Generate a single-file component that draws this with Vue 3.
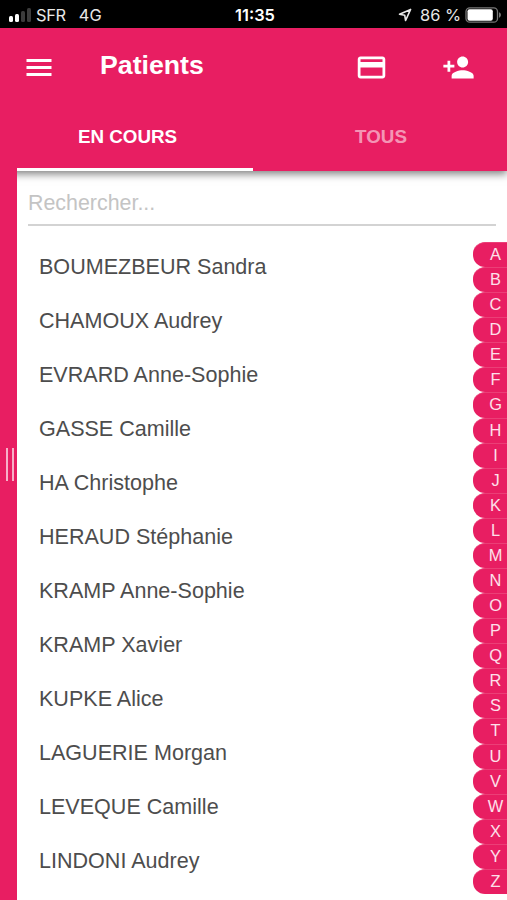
<template>
  <div class="phone">
    <div class="status-bar">
      <div class="status-side">
        <span class="signal">
          <i v-for="n in 4" :key="n" class="signal-bar" :class="['level-' + n, { on: n <= 2 }]"></i>
        </span>
        <span class="carrier">SFR</span>
        <span class="network">4G</span>
      </div>
      <span class="clock">11:35</span>
      <div class="status-side right">
        <svg class="location" viewBox="0 0 14 14">
          <path d="M12.6 1.4 1.5 6.3l5.2.9.9 5.3z" />
        </svg>
        <span class="percent">86 %</span>
        <svg class="battery" viewBox="0 0 37 16">
          <rect class="battery-case" x="1" y=".8" width="31.5" height="14.4" rx="3.8" />
          <rect class="battery-fill" x="2.5" y="2.3" width="25.3" height="11.4" rx="2" />
          <path class="battery-tip" d="M34 5.3c2.6.7 2.6 4.7 0 5.4z" />
        </svg>
      </div>
    </div>

    <header class="toolbar">
      <div class="toolbar-row">
        <svg class="menu-icon" viewBox="0 0 26 19">
          <path d="M.5 1h25v3h-25zM.5 8h25v3h-25zM.5 15h25v3h-25z" />
        </svg>
        <h1 class="title">Patients</h1>
        <svg class="action-icon" viewBox="0 0 24 24">
          <path d="M20 4H4c-1.11 0-1.99.89-1.99 2L2 18c0 1.11.89 2 2 2h16c1.11 0 2-.89 2-2V6c0-1.11-.89-2-2-2zm0 14H4v-6h16v6zm0-10H4V6h16v2z" />
        </svg>
        <svg class="action-icon add" viewBox="0 0 24 24">
          <path d="M15 12c2.21 0 4-1.79 4-4s-1.79-4-4-4-4 1.79-4 4 1.79 4 4 4zm-9-2V7H4v3H1v2h3v3h2v-3h3v-2H6zm9 4c-2.67 0-8 1.34-8 4v2h16v-2c0-2.66-5.33-4-8-4z" />
        </svg>
      </div>
      <nav class="tabs">
        <button
          v-for="tab in tabs"
          :key="tab"
          class="tab"
          :class="{ active: tab === activeTab }"
          @click="activeTab = tab"
        >{{ tab }}</button>
      </nav>
    </header>

    <div class="body">
      <div class="drawer-edge">
        <span class="grip"></span>
      </div>
      <main class="content">
        <input v-model="search" class="search" type="text" placeholder="Rechercher..." />
        <div class="columns">
          <ul class="patients">
            <li v-for="patient in visiblePatients" :key="patient" class="patient">{{ patient }}</li>
          </ul>
          <div class="index">
            <span v-for="letter in letters" :key="letter" class="letter">{{ letter }}</span>
          </div>
        </div>
      </main>
    </div>
  </div>
</template>

<script setup>
import { ref, computed } from 'vue'

const tabs = ['EN COURS', 'TOUS']
const activeTab = ref('EN COURS')
const search = ref('')

const letters = 'ABCDEFGHIJKLMNOPQRSTUVWXYZ'.split('')

const patients = [
  'BOUMEZBEUR Sandra',
  'CHAMOUX Audrey',
  'EVRARD Anne-Sophie',
  'GASSE Camille',
  'HA Christophe',
  'HERAUD Stéphanie',
  'KRAMP Anne-Sophie',
  'KRAMP Xavier',
  'KUPKE Alice',
  'LAGUERIE Morgan',
  'LEVEQUE Camille',
  'LINDONI Audrey',
]

const visiblePatients = computed(() =>
  patients.filter(p => p.toLowerCase().includes(search.value.toLowerCase()))
)
</script>

<style>
body {
  margin: 0;
}
</style>

<style scoped>
.phone {
  width: 507px;
  height: 900px;
  display: flex;
  flex-direction: column;
  overflow: hidden;
  background: #fff;
  font-family: "Liberation Sans", Arial, sans-serif;
}

.status-bar {
  height: 28px;
  flex: none;
  display: flex;
  align-items: center;
  background: #000;
  color: #e8e8e8;
  font-family: Inter, sans-serif;
  font-size: 16.4px;
  line-height: 28px;
  padding: 2px 5px 0 8px;
  box-sizing: border-box;
}

.status-side {
  flex: 1;
  display: flex;
  align-items: center;
}

.status-side.right {
  justify-content: flex-end;
}

.signal {
  display: flex;
  align-items: flex-end;
  gap: 2px;
  height: 14px;
  margin: 0 5px 1px 1px;
}

.signal-bar {
  width: 4px;
  border-radius: 1.5px;
  background: #3c3c3c;
}

.signal-bar.on {
  background: #fff;
}

.level-1 { height: 6px; }
.level-2 { height: 8px; }
.level-3 { height: 11px; }
.level-4 { height: 14px; }

.carrier {
  letter-spacing: -0.3px;
}

.network {
  margin-left: 13px;
}

.clock {
  color: #fff;
  font-weight: 600;
}

.location {
  width: 14px;
  height: 14px;
  margin-right: 8px;
  fill: none;
  stroke: #e8e8e8;
  stroke-width: 1.6;
  stroke-linejoin: round;
}

.battery {
  width: 37px;
  height: 16px;
  margin: 0 0 1px 4px;
}

.battery-case {
  fill: none;
  stroke: #777;
  stroke-width: 1.3;
}

.battery-fill {
  fill: #fff;
}

.battery-tip {
  fill: #777;
}

.toolbar {
  height: 143px;
  flex: none;
  display: flex;
  flex-direction: column;
  background: #e81e62;
  color: #fff;
  position: relative;
  z-index: 1;
  box-shadow: 0 3px 8px rgba(0, 0, 0, 0.5);
}

.toolbar-row {
  height: 78px;
  display: flex;
  align-items: center;
  padding: 0 32px 0 26px;
}

.toolbar svg {
  fill: #fff;
}

.menu-icon {
  width: 26px;
  height: 19px;
}

.title {
  flex: 1;
  margin: 0 0 5px 48px;
  font-size: 26.7px;
  line-height: 30px;
  font-weight: bold;
}

.action-icon {
  width: 33px;
  height: 33px;
}

.action-icon.add {
  margin-left: 54px;
}

.tabs {
  flex: 1;
  display: flex;
  padding-left: 17px;
}

.tab {
  flex: none;
  width: 256px;
  padding: 0 0 1px;
  margin: 0;
  border: 0;
  border-bottom: 3px solid transparent;
  background: none;
  color: rgba(255, 255, 255, 0.55);
  font-family: inherit;
  font-size: 18.8px;
  font-weight: bold;
}

.tab.active {
  width: 236px;
  padding-right: 15px;
  color: #fff;
  border-bottom-color: #fff;
}

.body {
  flex: 1;
  min-height: 0;
  display: flex;
}

.drawer-edge {
  width: 17px;
  flex: none;
  display: flex;
  justify-content: flex-end;
  background: #e81e62;
  position: relative;
  z-index: 2;
}

.grip {
  width: 4px;
  height: 33px;
  margin: 277px 3px 0 0;
  border: solid rgba(255, 255, 255, 0.65);
  border-width: 0 2px;
}

.content {
  flex: 1;
  display: flex;
  flex-direction: column;
}

.search {
  height: 55px;
  margin: 0 11px;
  padding: 11px 0 0;
  box-sizing: border-box;
  border: 0;
  border-bottom: 2px solid #d3d3d3;
  border-radius: 0;
  outline: 0;
  background: none;
  color: #4d4d4d;
  font-family: inherit;
  font-size: 21.4px;
}

.search::placeholder {
  color: #c4c4c4;
}

.columns {
  flex: 1;
  display: flex;
  justify-content: space-between;
  padding-top: 15px;
}

.patients {
  margin: 0;
  padding: 0 0 0 22px;
  list-style: none;
}

.patient {
  height: 54px;
  line-height: 52px;
  font-size: 21.55px;
  color: #4d4d4d;
}

.index {
  width: 34px;
  padding-top: 1px;
}

.letter {
  display: block;
  height: 25.08px;
  box-sizing: border-box;
  padding-left: 11px;
  border-top: 1px solid #eb3f77;
  border-radius: 12px 0 0 12px;
  background: #e81e62;
  color: #fde0ea;
  font-size: 16.4px;
  line-height: 22px;
  text-align: center;
}
</style>
